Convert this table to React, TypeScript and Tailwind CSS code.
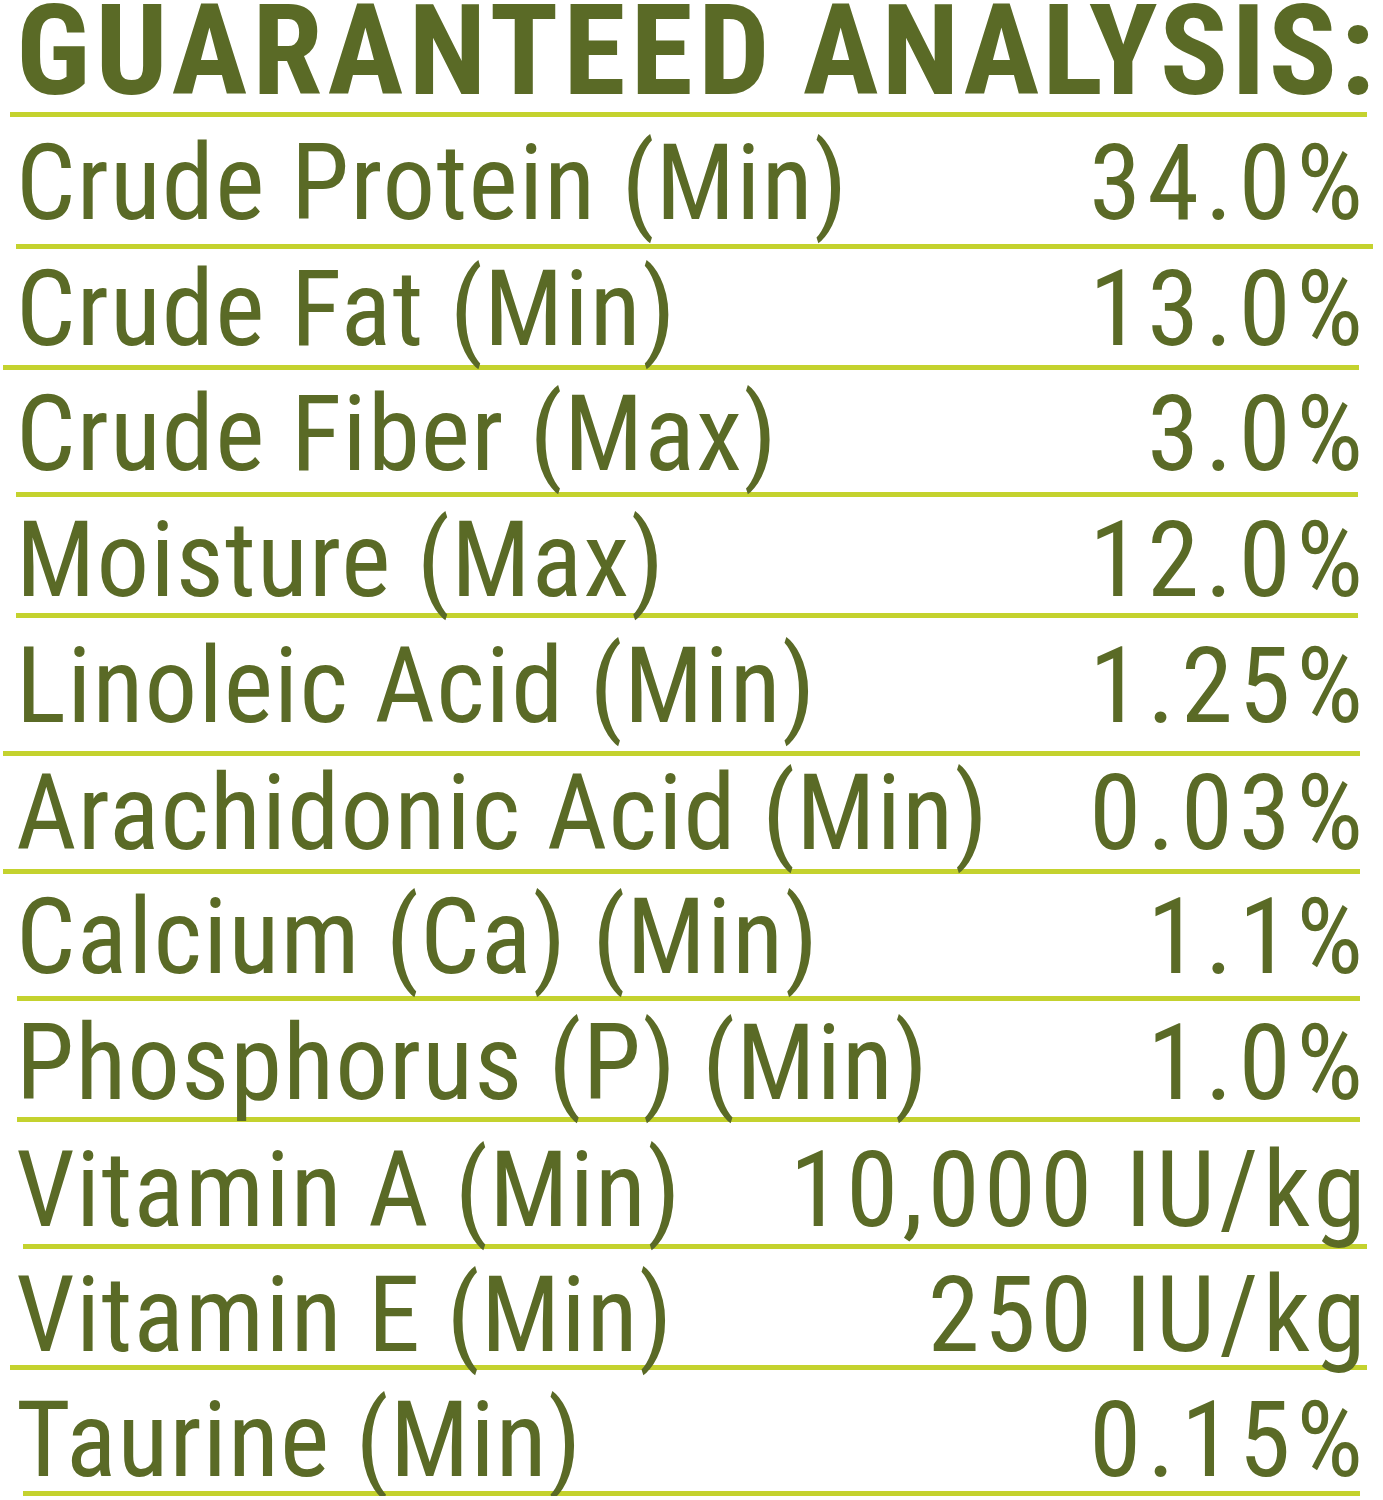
type Row = {
  label: string;
  value: string;
  box: string;
  line: string;
  vt?: string;
};

// 行高和下划线位置按原图逐行量出来的
const rows: Row[] = [
  { label: 'Crude Protein (Min)', value: '34.0%', box: 'h-[127px] pb-[18px]', line: 'ml-[16px] mr-[10px]' },
  { label: 'Crude Fat (Min)', value: '13.0%', box: 'h-[116px] pb-[13px]', line: 'ml-[3px] mr-[24px]' },
  { label: 'Crude Fiber (Max)', value: '3.0%', box: 'h-[122px] pb-[15px]', line: 'ml-[16px] mr-[25px]' },
  { label: 'Moisture (Max)', value: '12.0%', box: 'h-[116px] pb-[10px]', line: 'ml-[16px] mr-[25px]' },
  { label: 'Linoleic Acid (Min)', value: '1.25%', box: 'h-[133px] pb-[22px]', line: 'ml-[3px] mr-[23px]' },
  { label: 'Arachidonic Acid (Min)', value: '0.03%', box: 'h-[113px] pb-[13px]', line: 'ml-[3px] mr-[23px]' },
  { label: 'Calcium (Ca) (Min)', value: '1.1%', box: 'h-[122px] pb-[16px]', line: 'ml-[17px] mr-[23px]' },
  { label: 'Phosphorus (P) (Min)', value: '1.0%', box: 'h-[116px] pb-[11px]', line: 'ml-[17px] mr-[23px]' },
  { label: 'Vitamin A (Min)', value: '10,000 IU/kg', box: 'h-[122px] pb-[11px]', line: 'ml-[23px] mr-[16px]', vt: 'tracking-[4.5px] -mr-[7px]' },
  { label: 'Vitamin E (Min)', value: '250 IU/kg', box: 'h-[116px] pb-[7px]', line: 'ml-[10px] mr-[16px]', vt: 'tracking-[4.5px] -mr-[7px]' },
  { label: 'Taurine (Min)', value: '0.15%', box: 'h-[121px] pb-[8px]', line: 'ml-[23px] mr-[23px]' },
];

export default function App() {
  return (
    <div className="w-[1383px] bg-white text-[#5a6a26] font-['Roboto_Condensed',sans-serif]">
      <div className="h-[112px] flex items-end pl-[16px] pb-[10px]">
        <h1 className="relative z-10 flex text-[127px] font-bold leading-[0.8] whitespace-nowrap">
          <span className="tracking-[5px]">GUARANTEED</span>
          <span className="ml-[28px] tracking-[3px]">ANALYSIS:</span>
        </h1>
      </div>
      <div className="h-[5px] bg-[#c4d22e] ml-[10px] mr-[16px]" />

      {rows.map((r) => (
        <div key={r.label}>
          <div className={`flex items-end justify-between pl-[16px] pr-[20px] text-[105px] leading-[0.8] whitespace-nowrap ${r.box}`}>
            <span className="relative z-10 tracking-[1.2px]">{r.label}</span>
            <span className={`relative z-10 ${r.vt ?? 'tracking-[6px] -mr-[6px]'}`}>{r.value}</span>
          </div>
          <div className={`h-[5px] bg-[#c4d22e] ${r.line}`} />
        </div>
      ))}
    </div>
  );
}
